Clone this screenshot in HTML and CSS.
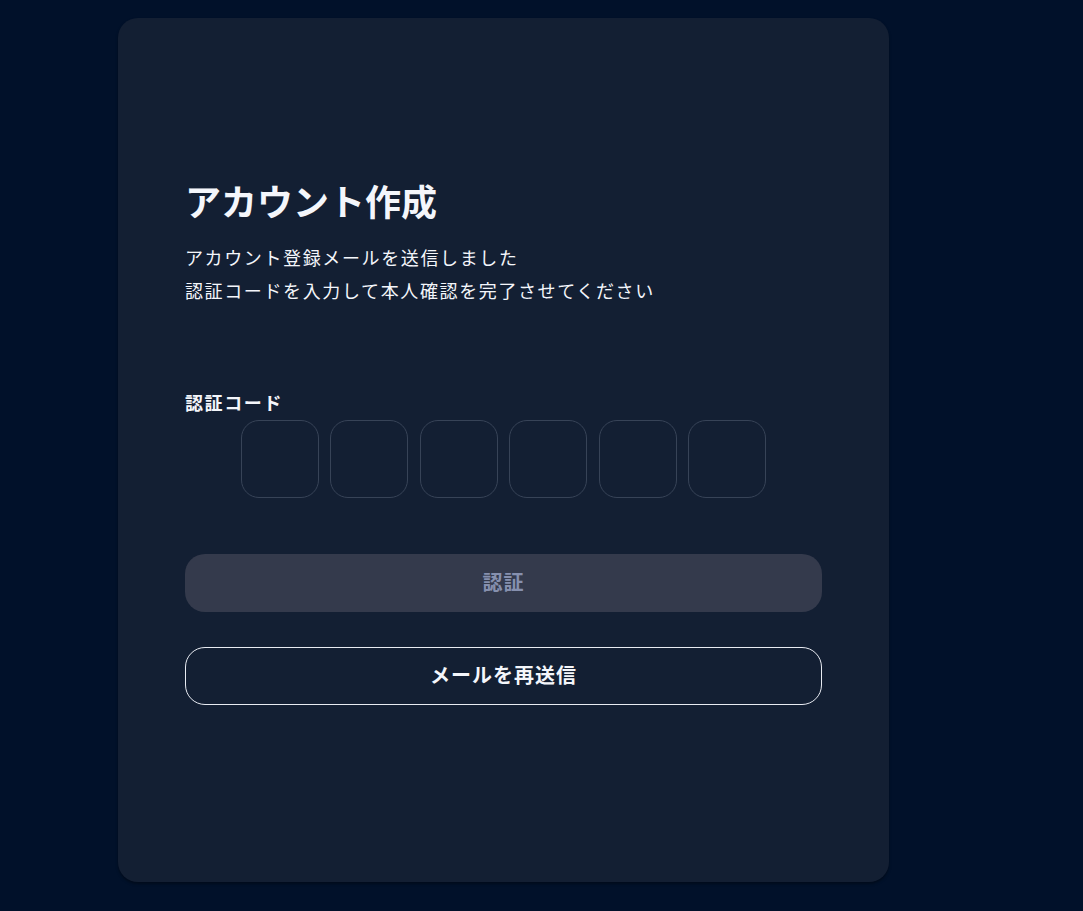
FILE: index.html
```html
<!DOCTYPE html>
<html lang="ja">
<head>
  <meta charset="UTF-8" />
  <meta name="viewport" content="width=device-width, initial-scale=1.0" />
  <title>アカウント作成</title>
  <link rel="stylesheet" href="styles.css">
</head>
<body>

  <div class="page">
    <div class="card">
      <h1 class="title">アカウント作成</h1>
      <p class="lead">
        アカウント登録メールを送信しました<br>
        認証コードを入力して本人確認を完了させてください
      </p>

      <label class="code-label" for="code-1">認証コード</label>
      <div class="code-row">
        <input class="code-box" id="code-1" type="text" maxlength="1" />
        <input class="code-box" type="text" maxlength="1" />
        <input class="code-box" type="text" maxlength="1" />
        <input class="code-box" type="text" maxlength="1" />
        <input class="code-box" type="text" maxlength="1" />
        <input class="code-box" type="text" maxlength="1" />
      </div>

      <button class="btn btn-verify" disabled>認証</button>
      <button class="btn btn-resend">メールを再送信</button>
    </div>
  </div>

</body>
</html>
```

FILE: styles.css
```css
html, body {
  margin: 0;
  padding: 0;
}

body {
  background: #01112a;
  font-family: "Noto Sans CJK JP", "Noto Sans", sans-serif;
  color: #f4f6fb;
}

.page {
  padding: 18px 0 29px 118px;
}

.card {
  width: 771px;
  height: 864px;
  box-sizing: border-box;
  background: #131f33;
  border-radius: 20px;
  box-shadow: 0 2px 3px rgba(0, 0, 0, 0.35);
  padding: 155px 67px 0;
  display: flex;
  flex-direction: column;
}

.title {
  margin: 0;
  font-size: 36px;
  line-height: 1.5;
  font-weight: 700;
}

.lead {
  margin: 14px 0 0;
  font-size: 18px;
  line-height: 33px;
  letter-spacing: 0.09em;
}

.code-label {
  margin-top: 82px;
  font-size: 18px;
  font-weight: 700;
  line-height: 1.5;
  letter-spacing: 0.09em;
}

.code-row {
  display: flex;
  justify-content: center;
  gap: 11.5px;
  margin-top: 4px;
}

.code-box {
  width: 78px;
  height: 78px;
  box-sizing: border-box;
  border: 1px solid #374357;
  border-radius: 18px;
  background: transparent;
  color: #fff;
  font-size: 28px;
  text-align: center;
  outline: none;
}

.btn {
  width: 100%;
  padding: 0 0 4px;
  font-family: inherit;
  font-size: 20px;
  font-weight: 700;
  letter-spacing: 0.05em;
  border-radius: 20px;
  cursor: pointer;
}

.btn-verify {
  margin-top: 56px;
  height: 58px;
  border: none;
  background: #343a4c;
  color: #8690ae;
}

.btn-resend {
  margin-top: 35px;
  height: 58px;
  border: 1px solid #e8ebf2;
  background: transparent;
  color: #f4f6fb;
}
```
